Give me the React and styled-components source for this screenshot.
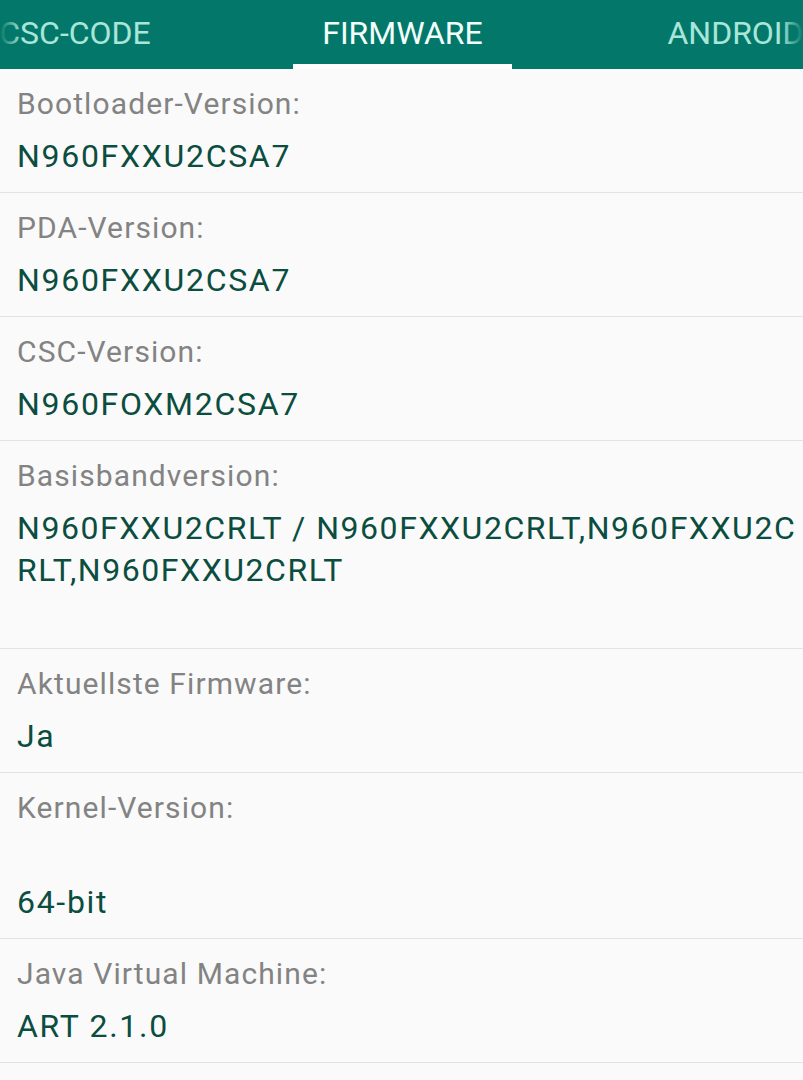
import React from "react";
import styled, { createGlobalStyle } from "styled-components";

const Global = createGlobalStyle`
  html, body { margin: 0; padding: 0; background: #fafafa; }
  body { font-family: Roboto, "Noto Sans", "Liberation Sans", sans-serif; }
  * { box-sizing: border-box; }
`;

const Page = styled.div`
  width: 803px;
  min-height: 1080px;
  background: #fafafa;
  overflow: hidden;
`;

const TabBar = styled.div`
  position: relative;
  height: 69px;
  background: #03786a;
  overflow: hidden;
  &::before, &::after {
    content: "";
    position: absolute;
    top: 0;
    bottom: 5px;
    width: 22px;
    z-index: 2;
  }
  &::before { left: 0; background: linear-gradient(to right, #03786a, rgba(3,120,106,0)); }
  &::after { right: 0; background: linear-gradient(to left, #03786a, rgba(3,120,106,0)); }
`;

const TabStrip = styled.div`
  display: flex;
  height: 100%;
  margin-left: ${(p) => p.$offset}px;
`;

const Tab = styled.div`
  position: relative;
  flex: 0 0 ${(p) => p.$w}px;
  display: flex;
  align-items: center;
  justify-content: center;
  padding-bottom: 4px;
  font-size: 32px;
  color: ${(p) => (p.$active ? "#f2fffb" : "#a9e6d9")};
  white-space: nowrap;
  &::after {
    content: "";
    display: ${(p) => (p.$active ? "block" : "none")};
    position: absolute;
    left: 0;
    right: 0;
    bottom: 0;
    height: 5px;
    background: #ffffff;
  }
`;

const List = styled.div`
  display: flex;
  flex-direction: column;
`;

const Row = styled.div`
  padding: 13px 0 15px 17px;
  border-bottom: 1px solid #e3e3e3;
`;

const Label = styled.div`
  font-size: 30px;
  line-height: 44px;
  letter-spacing: 1.1px;
  color: #838383;
`;

const Value = styled.div`
  font-size: 32px;
  line-height: 42px;
  letter-spacing: ${(p) => (p.$tight ? 1.55 : 1.7)}px;
  color: #0b4d3f;
  white-space: pre-wrap;
  word-break: break-all;
  margin-top: 9px;
`;

const tabs = [
  { t: "CSC-CODE", w: 436 },
  { t: "FIRMWARE", w: 219, active: true },
  { t: "ANDROID", w: 447 },
];

const rows = [
  { l: "Bootloader-Version:", v: "N960FXXU2CSA7" },
  { l: "PDA-Version:", v: "N960FXXU2CSA7" },
  { l: "CSC-Version:", v: "N960FOXM2CSA7" },
  { l: "Basisbandversion:", v: "N960FXXU2CRLT / N960FXXU2CRLT,N960FXXU2CRLT,N960FXXU2CRLT\n ", tight: true },
  { l: "Aktuellste Firmware:", v: "Ja" },
  { l: "Kernel-Version:", v: " \n64-bit" },
  { l: "Java Virtual Machine:", v: "ART 2.1.0" },
];

export default function App() {
  return (
    <Page>
      <Global />
      <TabBar>
        <TabStrip $offset={-143}>
          {tabs.map((t) => (
            <Tab key={t.t} $w={t.w} $active={t.active}>
              {t.t}
            </Tab>
          ))}
        </TabStrip>
      </TabBar>
      <List>
        {rows.map((r) => (
          <Row key={r.l}>
            <Label>{r.l}</Label>
            <Value $tight={r.tight}>{r.v}</Value>
          </Row>
        ))}
      </List>
    </Page>
  );
}
